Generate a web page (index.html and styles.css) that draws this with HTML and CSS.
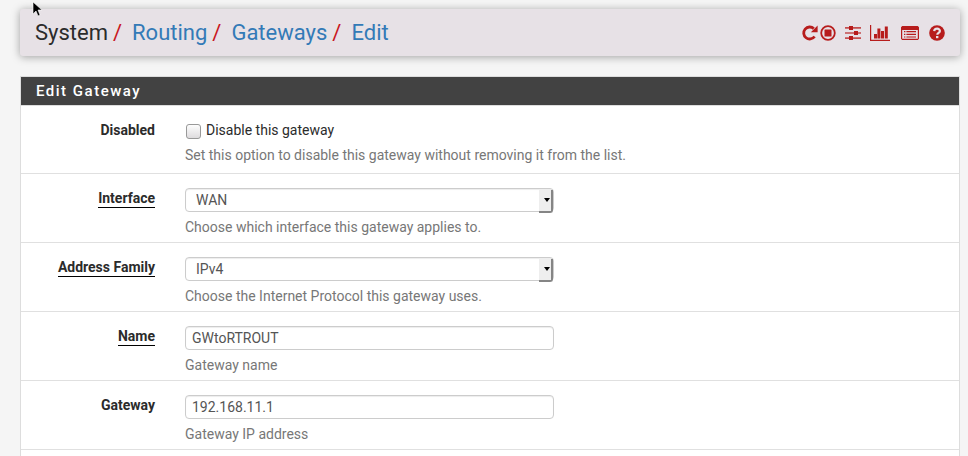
FILE: index.html
```html
<!DOCTYPE html>
<html lang="en">
<head>
<meta charset="utf-8">
<meta name="viewport" content="width=device-width, initial-scale=1">
<title>System: Routing: Gateways: Edit</title>
<link rel="stylesheet" href="styles.css">
</head>
<body>
<svg class="pointer" viewBox="0 0 10 16" aria-hidden="true"><path d="M1 1v12l3-3 2 5 2-1-2-5h4z" fill="#000" stroke="#fff" stroke-width=".6"/></svg>
<header class="page-header">
  <nav aria-label="Breadcrumb">
    <ol class="breadcrumb">
      <li>System</li>
      <li><a href="#">Routing</a></li>
      <li><a href="#">Gateways</a></li>
      <li><a href="#">Edit</a></li>
    </ol>
  </nav>
  <div class="actions">
    <a href="#" aria-label="Restart service"><svg width="16" height="16" viewBox="0 0 16 16"><path d="M12.600 11.500A6 6 0 1 1 11.800 3.600" fill="none" stroke="currentColor" stroke-width="2.800"/><path d="M15.600 .6v6.700H8.900z" fill="currentColor"/></svg></a>
    <a href="#" class="stop" aria-label="Stop service"><svg width="16" height="16" viewBox="0 0 16 16"><circle cx="8" cy="8" r="6.800" fill="none" stroke="currentColor" stroke-width="1.800"/><rect x="4.500" y="4.500" width="7" height="7" rx=".6" fill="currentColor"/></svg></a>
    <a href="#" class="settings" aria-label="Settings"><svg width="16" height="16" viewBox="0 0 16 16" fill="currentColor"><path d="M0 2h16v1.700H0zM0 7.200h16v1.600H0zM0 12.200h16v1.700H0z" opacity=".75"/><path d="M4 1h4v4H4zM9 6h4v4H9zM4 11h4v4H4z"/></svg></a>
    <a href="#" class="graph" aria-label="Monitoring"><svg width="20" height="16" viewBox="0 0 20 16" fill="currentColor"><path d="M0 0h1.200v14.800H20V16H0zM4 9h3v4.400H4zM7.400 3.500h3v9.900h-3zM11 6h3v7.400h-3zM14.800 1.500h3v11.900h-3z"/></svg></a>
    <a href="#" class="log" aria-label="Logs"><svg width="18" height="16" viewBox="0 0 18 16" fill="currentColor"><path fill-rule="evenodd" d="M1.200 1h15.600L18 2.200v11.600L16.800 15H1.200L0 13.800V2.200zM1.200 5v8.800h15.600V5z"/><path d="M3 6h1.400v1.200H3zM5.400 6H15v1.200H5.400zM3 8.700h1.400v1.200H3zM5.400 8.700H15v1.200H5.400zM3 11.400h1.400v1.200H3zM5.400 11.400H15v1.200H5.400z"/></svg></a>
    <a href="#" class="help" aria-label="Help"><svg width="16" height="16" viewBox="0 0 16 16"><circle cx="8" cy="8" r="7.800" fill="currentColor"/><path d="M5.200 6.100C5.400 2.900 11 2.900 10.900 6c0 1.800-2.600 1.900-2.600 3.700" fill="none" stroke="#e7e1e6" stroke-width="2.200"/><path d="M7 11h2.400v2.200H7z" fill="#e7e1e6"/></svg></a>
  </div>
</header>
<main>
  <form class="panel">
    <h2 class="panel-title">Edit Gateway</h2>
    <div class="row option-row">
      <div class="label"><span>Disabled</span></div>
      <div class="field wide">
        <label class="check"><input type="checkbox" name="disabled">Disable this gateway</label>
        <p class="help-text">Set this option to disable this gateway without removing it from the list.</p>
      </div>
    </div>
    <div class="row">
      <div class="label required"><label for="interface">Interface</label></div>
      <div class="field">
        <div class="select"><select id="interface"><option>WAN</option></select></div>
        <p class="help-text">Choose which interface this gateway applies to.</p>
      </div>
    </div>
    <div class="row">
      <div class="label required"><label for="family">Address Family</label></div>
      <div class="field">
        <div class="select"><select id="family"><option>IPv4</option></select></div>
        <p class="help-text">Choose the Internet Protocol this gateway uses.</p>
      </div>
    </div>
    <div class="row">
      <div class="label required"><label for="name">Name</label></div>
      <div class="field">
        <input class="text" id="name" type="text" value="GWtoRTROUT">
        <p class="help-text">Gateway name</p>
      </div>
    </div>
    <div class="row">
      <div class="label"><label for="gateway">Gateway</label></div>
      <div class="field">
        <input class="text" id="gateway" type="text" value="192.168.11.1">
        <p class="help-text">Gateway IP address</p>
      </div>
    </div>
  </form>
</main>
</body>
</html>
```
FILE: styles.css
```css
* { box-sizing: border-box; }

body {
  margin: 0;
  padding: 9px 8px 0 20px;
  background: #f5f5f5;
  color: #2b2b2b;
  font: 14px/20px Roboto, sans-serif;
}

.pointer {
  position: absolute;
  top: 1px;
  left: 32px;
  width: 10px;
  height: 16px;
}

.page-header {
  display: flex;
  align-items: center;
  justify-content: space-between;
  height: 47px;
  padding: 0 15px;
  margin-bottom: 20px;
  background: #e7e1e6;
  border-radius: 3px;
  box-shadow: 0 1px 8px rgba(0, 0, 0, 0.35);
}

.breadcrumb {
  display: flex;
  margin: 0;
  padding: 0;
  list-style: none;
  font-size: 22px;
  line-height: 32px;
}

.breadcrumb li + li::before {
  content: "/";
  padding: 0 10px 0 5px;
  color: #c9171e;
}

a { color: #337ab7; text-decoration: none; }

.actions { display: flex; }
.actions a { display: flex; color: #b71c1c; }
.actions .stop { margin-left: 2px; }
.actions .settings { margin-left: 9px; }
.actions .graph { margin-left: 9px; }
.actions .log { margin-left: 11px; }
.actions .help { margin-left: 10px; }

.panel {
  background: #fff;
  border: 1px solid #ddd;
  min-height: 400px;
}

.panel-title {
  margin: 0;
  padding: 4px 15px;
  background: #424242;
  border-bottom: 1px solid #ddd;
  color: #fff;
  font-size: 15px;
  font-weight: 500;
  line-height: 20px;
  letter-spacing: 0.1em;
}

.row {
  display: grid;
  grid-template-columns: 149fr 399fr 390fr;
  padding: 14px 0 5px;
  border-bottom: 1px solid #e0e0e0;
}

.option-row { padding-bottom: 8px; }

.label {
  padding-right: 15px;
  text-align: right;
  font-weight: 700;
}

.required label {
  display: inline-block;
  line-height: 18px;
  border-bottom: 1px solid #000;
}

.field { padding: 0 15px; }
.wide { grid-column: 2 / 4; }

.help-text { margin: 5px 0 0; color: #777; }

.check { display: flex; align-items: center; gap: 5px; }

.check input {
  appearance: none;
  width: 15px;
  height: 15px;
  margin: 2px 0 0 1px;
  border: 1px solid #999;
  border-radius: 3px;
  background: linear-gradient(#fdfdfd, #dedcde);
}

.text,
select {
  display: block;
  width: 100%;
  height: 24px;
  padding: 0 6px;
  border: 1px solid #ccc;
  border-radius: 4px;
  background: #fff;
  box-shadow: inset 0 1px 1px rgba(0, 0, 0, 0.075);
  color: #555;
  font: inherit;
}

select { appearance: none; padding: 0 10px; }

.select { position: relative; }

.select::before {
  content: "";
  position: absolute;
  top: 2px;
  right: 1px;
  width: 12px;
  height: 21px;
  background: #eee;
  border: solid #858585;
  border-width: 0 2px 2px 0;
  border-radius: 0 0 3px 0;
  pointer-events: none;
}

.select::after {
  content: "";
  position: absolute;
  top: 10px;
  right: 4px;
  border: solid transparent;
  border-top-color: #000;
  border-width: 4px 3px 0;
  pointer-events: none;
}
```
